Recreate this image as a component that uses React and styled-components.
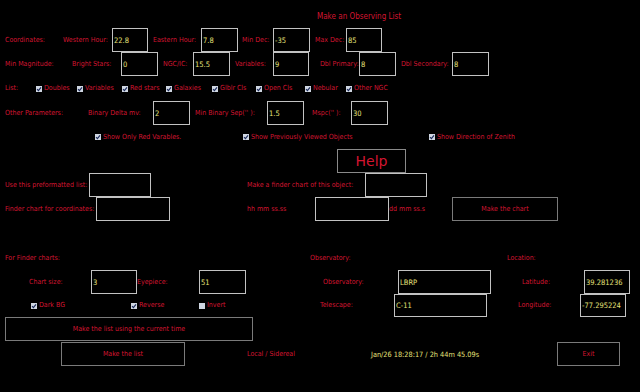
import React from "react";
import styled, { createGlobalStyle } from "styled-components";

const Global = createGlobalStyle`
  html, body { margin: 0; padding: 0; background: #000; }
`;

const RED = "#d41530";
const YELLOW = "#e6e27a";
const FONT = `"DejaVu Sans Condensed", "Liberation Sans", sans-serif`;

const Page = styled.div`
  width: 640px;
  height: 392px;
  background: #000;
  padding-left: 5px;
  box-sizing: border-box;
  font-family: ${FONT};
  font-size: 7px;
  color: ${RED};
  overflow: hidden;
`;

const Title = styled.div`
  height: 28px;
  padding: 12px 0 0 312px;
  box-sizing: border-box;
  line-height: 9px;
  font-size: 8px;
`;

const Row = styled.div`
  display: flex;
  align-items: center;
  height: ${(p) => p.$h || 24}px;
  margin-top: ${(p) => p.$mt || 0}px;
  padding-left: ${(p) => p.$pl || 0}px;
`;

const Label = styled.span`
  flex: none;
  width: ${(p) => p.$w}px;
  margin-left: ${(p) => p.$ml || 0}px;
  white-space: nowrap;
  line-height: 9px;
  color: ${(p) => (p.$yellow ? YELLOW : RED)};
  font-size: ${(p) => (p.$yellow ? 7.3 : 7)}px;
`;

const Field = styled.input`
  flex: none;
  box-sizing: border-box;
  width: ${(p) => p.$w}px;
  height: ${(p) => p.$h || 24}px;
  margin: 0 0 0 ${(p) => p.$ml || 0}px;
  background: #000;
  border: 1px solid #c2c2c2;
  color: ${YELLOW};
  font-family: ${FONT};
  font-size: 7.5px;
  padding: 0 0 0 1px;
  outline: none;
`;

const Check = styled.span`
  flex: none;
  display: flex;
  align-items: center;
  gap: 2px;
  width: ${(p) => p.$w}px;
  margin-left: ${(p) => p.$ml || 0}px;
  white-space: nowrap;
  line-height: 9px;
`;

const Box = styled.span`
  flex: none;
  width: 6px;
  height: 6px;
  background: #cfd6e2;
  display: flex;
  align-items: center;
  justify-content: center;
`;

const Button = styled.button`
  flex: none;
  box-sizing: border-box;
  width: ${(p) => p.$w}px;
  height: 24px;
  margin: 0 0 0 ${(p) => p.$ml || 0}px;
  background: #000;
  border: 1px solid #7a7a7a;
  color: ${RED};
  font-family: ${FONT};
  font-size: 7px;
  padding: 0;
`;

const HelpButton = styled(Button)`
  font-size: 14px;
  font-family: "DejaVu Sans", sans-serif;
  border-color: #8a8a8a;
`;

function CheckItem({ w, ml, checked = true, children }) {
  return (
    <Check $w={w} $ml={ml}>
      <Box>
        {checked && (
          <svg width="6" height="6" viewBox="0 0 6 6">
            <path d="M1 3.2 L2.4 4.6 L5 1.4" stroke="#1a2a5a" strokeWidth="1.1" fill="none" />
          </svg>
        )}
      </Box>
      {children}
    </Check>
  );
}

export default function App() {
  return (
    <Page>
      <Global />
      <Title>Make an Observing List</Title>

      <Row>
        <Label $w={58}>Coordinates:</Label>
        <Label $w={49}>Western Hour:</Label>
        <Field $w={36} readOnly value="22.8" />
        <Label $ml={5} $w={48}>Eastern Hour:</Label>
        <Field $w={37} readOnly value="7.8" />
        <Label $ml={4} $w={31}>Min Dec:</Label>
        <Field $w={37} readOnly value="-35" />
        <Label $ml={5} $w={31}>Max Dec:</Label>
        <Field $w={36} readOnly value="85" />
      </Row>

      <Row>
        <Label $w={67}>Min Magnitude:</Label>
        <Label $w={49}>Bright Stars:</Label>
        <Field $w={37} readOnly value="0" />
        <Label $ml={5} $w={30}>NGC/IC:</Label>
        <Field $w={37} readOnly value="15.5" />
        <Label $ml={5} $w={38}>Variables:</Label>
        <Field $w={36} readOnly value="9" />
        <Label $ml={11} $w={39}>Dbl Primary:</Label>
        <Field $w={37} readOnly value="8" />
        <Label $ml={5} $w={51}>Dbl Secondary:</Label>
        <Field $w={37} readOnly value="8" />
      </Row>

      <Row $h={25}>
        <Label $w={31}>List:</Label>
        <CheckItem w={41}>Doubles</CheckItem>
        <CheckItem w={45}>Variables</CheckItem>
        <CheckItem w={44}>Red stars</CheckItem>
        <CheckItem w={46}>Galaxies</CheckItem>
        <CheckItem w={44}>Glblr Cls</CheckItem>
        <CheckItem w={49}>Open Cls</CheckItem>
        <CheckItem w={41}>Nebular</CheckItem>
        <CheckItem w={60}>Other NGC</CheckItem>
      </Row>

      <Row>
        <Label $w={83}>Other Parameters:</Label>
        <Label $w={65}>Binary Delta mv:</Label>
        <Field $w={37} readOnly value="2" />
        <Label $ml={5} $w={72}>Min Binary Sep('' ):</Label>
        <Field $w={37} readOnly value="1.5" />
        <Label $ml={8} $w={39}>Mspc('' ):</Label>
        <Field $w={37} readOnly value="30" />
      </Row>

      <Row $pl={90}>
        <CheckItem w={148}>Show Only Red Varables.</CheckItem>
        <CheckItem w={186}>Show Previously Viewed Objects</CheckItem>
        <CheckItem w={120}>Show Direction of Zenith</CheckItem>
      </Row>

      <Row $pl={332}>
        <HelpButton $w={69}>Help</HelpButton>
      </Row>

      <Row>
        <Label $w={84}>Use this preformatted list:</Label>
        <Field $w={62} readOnly value="" />
        <Label $ml={96} $w={118}>Make a finder chart of this object:</Label>
        <Field $w={62} readOnly value="" />
      </Row>

      <Row>
        <Label $w={91}>Finder chart for coordinates:</Label>
        <Field $w={74} readOnly value="" />
        <Label $ml={77} $w={68}>hh mm ss.ss</Label>
        <Field $w={74} readOnly value="" />
        <Label $w={63}>dd mm ss.s</Label>
        <Button $w={106}>Make the chart</Button>
      </Row>

      <Row $mt={25}>
        <Label $w={305}>For Finder charts:</Label>
        <Label $w={197}>Observatory:</Label>
        <Label $w={60}>Location:</Label>
      </Row>

      <Row>
        <Label $ml={24} $w={62}>Chart size:</Label>
        <Field $w={46} readOnly value="3" />
        <Label $w={62}>Eyepiece:</Label>
        <Field $w={47} readOnly value="51" />
        <Label $ml={77} $w={75}>Observatory:</Label>
        <Field $w={93} readOnly value="LBRP" />
        <Label $ml={31} $w={62}>Latitude:</Label>
        <Field $w={46} readOnly value="39.281236" />
      </Row>

      <Row $h={23}>
        <CheckItem ml={26} w={100}>Dark BG</CheckItem>
        <CheckItem w={68}>Reverse</CheckItem>
        <CheckItem w={121} checked={false}>Invert</CheckItem>
        <Label $w={74}>Telescape:</Label>
        <Field $w={93} $h={23} readOnly value="C-11" />
        <Label $ml={31} $w={62}>Longitude:</Label>
        <Field $w={46} $h={23} readOnly value="-77.295224" />
      </Row>

      <Row>
        <Button $w={248}>Make the list using the current time</Button>
      </Row>

      <Row $mt={1}>
        <Button $ml={56} $w={124}>Make the list</Button>
        <Label $ml={62} $w={124}>Local / Sidereal</Label>
        <Label $w={186} $yellow>Jan/26 18:28:17 / 2h 44m 45.09s</Label>
        <Button $w={63}>Exit</Button>
      </Row>
    </Page>
  );
}
